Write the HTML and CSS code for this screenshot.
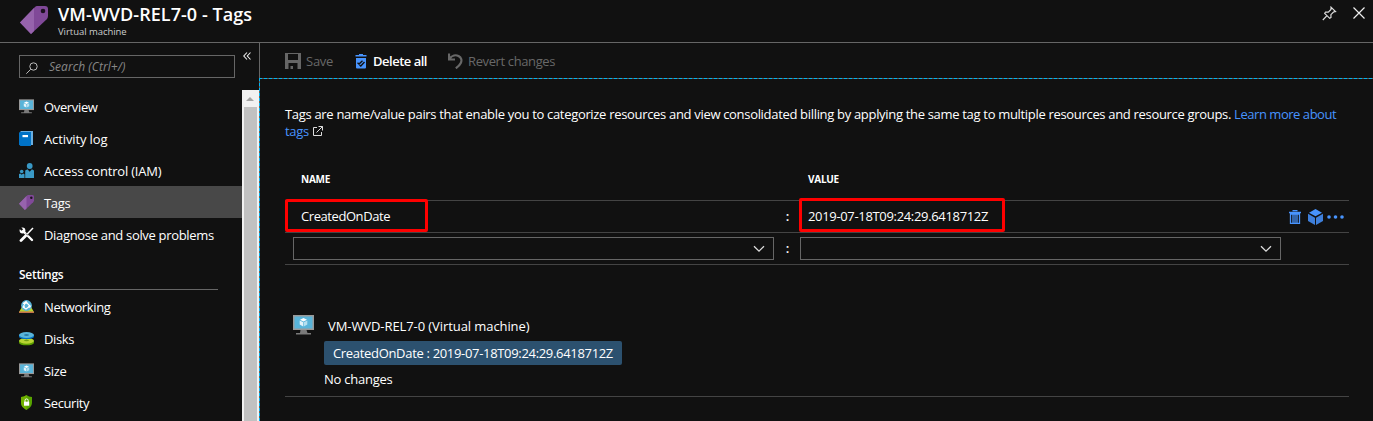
FILE: index.html
```html
<!DOCTYPE html>
<html lang="en">
<head>
<meta charset="utf-8">
<title>VM-WVD-REL7-0 - Tags</title>
<link rel="stylesheet" href="styles.css">
</head>
<body>
<svg class="defs" width="0" height="0" aria-hidden="true">
  <symbol id="tag" viewBox="0 0 28 28"><path d="M0 16.500 15 1q1-1 2-1h8q3 0 3 3v7q0 2-1.500 3.500L11 28z" fill="#804998"/><path d="M0 16.500 14 2v23l-3 3z" fill="#9663ac"/><circle cx="23" cy="5" r="2.300" fill="#1c1020"/></symbol>
  <symbol id="vm" viewBox="0 0 21 20"><path d="M0 0h21v15H0z" fill="#999"/><path d="M1.500 1.500h18v12h-18z" fill="#59b4d9"/><path d="M7.500 15h6l1 3h3.500v1.500h-15V18H7z" fill="#7a7a7a"/><path d="M10.500 3 14 4.700 10.500 6.500 7 4.700z" fill="#fff"/><path d="M6.700 5.500 10.200 7.300v4.200L6.700 9.600z" fill="#e3f3fa"/><path d="M14.300 5.500 10.800 7.300v4.200l3.500-1.900z" fill="#b7e0f0"/></symbol>
  <symbol id="chev" viewBox="0 0 12 8"><path d="m1 1.200 5 5 5-5" fill="none" stroke="#ddd" stroke-width="1.300"/></symbol>
</svg>
<header class="header">
  <svg class="header-icon"><use href="#tag"/></svg>
  <div class="heading"><h1 class="title">VM-WVD-REL7-0 - Tags</h1><p class="subtitle">Virtual machine</p></div>
  <svg class="pin" viewBox="0 0 15 15"><path d="M9 1.200 13.500 5.700 11.500 6 8.900 8.700 9 11.500 7.700 12.300 2.700 7.300 3.500 6 6.300 6.100 9 3.400zM5 9.700.8 14" fill="none" stroke="#ddd" stroke-width="1.200"/></svg>
  <svg class="close" viewBox="0 0 12 12"><path d="m.5.5 11 11M11.500.5l-11 11" fill="none" stroke="#eee" stroke-width="1.200"/></svg>
</header>
<div class="body">
  <aside class="sidebar">
    <div class="search-row">
      <div class="search"><svg class="search-icon" viewBox="0 0 12 12"><circle cx="7.500" cy="4.500" r="3.700" fill="none" stroke="#bbb"/><path d="M4.700 7.300.3 11.700" stroke="#bbb"/></svg><span class="placeholder">Search (Ctrl+/)</span></div>
      <svg class="collapse" viewBox="0 0 8 8"><path d="M4 .5.8 4 4 7.500M7.500.5 4.300 4l3.200 3.500" fill="none" stroke="#eee" stroke-width="1.100"/></svg>
    </div>
    <div class="menu-wrap">
      <nav class="menu">
        <a class="item"><svg class="icon"><use href="#vm"/></svg><span>Overview</span></a>
        <a class="item"><svg class="icon" viewBox="0 0 15 15"><path d="M1.500 0H14v14H1.500z" fill="#6aaee0"/><path d="M1.500 1H12v14H1.500L0 13.500v-12z" fill="#0072c6"/><path d="M3.500 4H9v2.200H3.500z" fill="#fff"/></svg><span class="log">Activity log</span></a>
        <a class="item"><svg class="icon" viewBox="0 0 15 15"><g fill="#3999c6"><circle cx="10.700" cy="3" r="2.900"/><path d="M6.200 7.500 8.500 6.300l2.200 2.400 2.200-2.400L15 7.500V15H6.200z"/><circle cx="2.700" cy="8.500" r="1.800"/><path d="m0 11 1.500-.6 1.200 1.300 1.300-1.300 1.500.8V15H0z"/></g></svg><span class="iam">Access control (IAM)</span></a>
        <a class="item selected"><svg class="icon"><use href="#tag"/></svg><span>Tags</span></a>
        <a class="item"><svg class="icon" viewBox="0 0 15 15"><path d="M3.500 3.500 13 13" stroke="#fff" stroke-width="2.400" stroke-linecap="round"/><circle cx="3.500" cy="3.500" r="2.900" fill="#fff"/><path d="M0 0 3.300 3" stroke="#111" stroke-width="2.300"/><path d="M14 1 7.500 7.700" stroke="#fff" stroke-width="1.500"/><path d="M6.500 9 2 13.500" stroke="#fff" stroke-width="2.800" stroke-linecap="round"/><path d="m7 6.500 2 2" stroke="#111" stroke-width=".7"/></svg><span class="diagnose">Diagnose and solve problems</span></a>
        <h2 class="section">Settings</h2>
        <a class="item"><svg class="icon" viewBox="0 0 15 15"><path d="M3 8h9l3 5H0z" fill="#b8d432"/><path d="M0 12.500h15V14H0z" fill="#c3714a"/><circle cx="7.500" cy="6.500" r="5.400" fill="#59b4d9"/><path d="M4 4.500 7 3l4 4-4 3-3-2 3-5M7 10l4-3" fill="none" stroke="#fff" stroke-width="1.100"/><circle cx="7" cy="3.500" r="1.200" fill="#fff"/><circle cx="10.500" cy="7.500" r="1.200" fill="#fff"/><circle cx="5" cy="8" r="1" fill="#fff"/></svg><span>Networking</span></a>
        <a class="item"><svg class="icon" viewBox="0 0 15 15"><path d="M0 10v1.500c0 3.800 15 3.800 15 0V10z" fill="#5d9e00"/><ellipse cx="7.500" cy="9.800" rx="7.500" ry="2.900" fill="#b8d432"/><ellipse cx="7.500" cy="9.500" rx="2.500" ry=".8" fill="#719e13"/><path d="M0 4v1.500c0 3.500 15 3.500 15 0V4z" fill="#0072c6"/><ellipse cx="7.500" cy="4" rx="7.500" ry="2.900" fill="#59b4d9"/><ellipse cx="7.500" cy="4" rx="2.500" ry=".8" fill="#176694"/></svg><span>Disks</span></a>
        <a class="item"><svg class="icon"><use href="#vm"/></svg><span>Size</span></a>
        <a class="item"><svg class="icon" viewBox="0 0 15 15"><path d="M7.500 0C9 1.300 11 2 13 2v5.500c0 3.500-2.500 5.800-5.500 7.500C4.500 13.300 2 11 2 7.500V2c2 0 4-.7 5.500-2z" fill="#57a300"/><path d="M7.500 0v15C4.500 13.300 2 11 2 7.500V2c2 0 4-.7 5.500-2z" fill="#7fba00" opacity=".65"/><path d="M5 6.700h5.200v4H5z" fill="#fff"/><path d="M6 7V5.500a1.600 1.600 0 0 1 3.200 0V7" fill="none" stroke="#fff"/></svg><span class="security">Security</span></a>
      </nav>
      <div class="scrollbar"><svg class="arrow" viewBox="0 0 8 4"><path d="M4 0 8 4H0z" fill="#a3a3a3"/></svg><div class="thumb"></div></div>
    </div>
  </aside>
  <main class="main">
    <div class="toolbar">
      <div class="tool save"><svg width="16" height="16" viewBox="0 0 16 16"><path d="M0 0h16v16H0z" fill="#666"/><path d="M3 1h10v6H3zM3.500 10h9v6h-9z" fill="#111"/><path d="M5.500 13H8v3H5.500z" fill="#666"/></svg><span>Save</span></div>
      <div class="tool delete"><svg width="12" height="15" viewBox="0 0 12 15"><path d="M4 0h4v1h3.500v1.500H.5V1H4zM1 4h10v9.500q0 1-1 1H2q-1 0-1-1z" fill="#4894fe"/><path d="M2.500 8.700 4 10l3.500-3.200M4.500 11l1.300 1 3.700-4" fill="none" stroke="#111" stroke-width="1.400"/></svg><span>Delete all</span></div>
      <div class="tool revert"><svg width="15" height="16" viewBox="0 0 15 16"><path d="M1 .5v6h6M1.200 6C4 2 8 1.700 10.500 3c3 1.500 3.500 4.500 2.300 7-.9 2-2.500 3.500-5 5.300" fill="none" stroke="#686868" stroke-width="2.200"/></svg><span>Revert changes</span></div>
    </div>
    <div class="content">
      <p class="intro"><span>Tags are name/value pairs that enable you to categorize resources and view consolidated billing by applying the same tag to multiple resources and resource groups.</span> <a class="link learn">Learn more about</a><br><a class="link">tags</a><svg class="external" viewBox="0 0 10 10"><path d="M4 1.500H.5v8h8V6M5.500.5h4v4M9.500.5l-6 6" fill="none" stroke="#ddd"/></svg></p>
      <div class="table">
        <div class="row head"><span class="name">NAME</span><span class="value">VALUE</span></div>
        <div class="row">
          <div class="mark mark-name"><span>CreatedOnDate</span></div><span class="colon">:</span>
          <div class="mark mark-value"><span>2019-07-18T09:24:29.6418712Z</span></div>
          <div class="actions">
            <svg width="12" height="14" viewBox="0 0 12 14"><path d="M3.500.5h5M0 2.500h12M1.500 4v9.400h9V4zM4 4v9M6 4v9M8 4v9" fill="none" stroke="#4894fe" stroke-width="1.300"/></svg>
            <svg width="15" height="16" viewBox="0 0 15 16"><path d="m7.500 0 6.500 3.700-6.500 3.600L1 3.700z" fill="#4894fe"/><path d="m0 4.700 7 4V16l-7-4zM15 4.700l-7 4V16l7-4z" fill="#3e7fdb"/></svg>
            <svg width="17" height="4" viewBox="0 0 17 4"><g fill="#4894fe"><circle cx="2" cy="2" r="1.800"/><circle cx="8.500" cy="2" r="1.800"/><circle cx="15" cy="2" r="1.800"/></g></svg>
          </div>
        </div>
        <div class="row inputs"><div class="select"><svg class="chev"><use href="#chev"/></svg></div><span class="colon">:</span><div class="select"><svg class="chev"><use href="#chev"/></svg></div></div>
      </div>
      <section class="summary">
        <svg class="vm"><use href="#vm"/></svg>
        <div class="details"><p class="resource">VM-WVD-REL7-0 (Virtual machine)</p><p class="pill">CreatedOnDate : 2019-07-18T09:24:29.6418712Z</p><p class="nochange">No changes</p></div>
      </section>
    </div>
  </main>
</div>
</body>
</html>
```
FILE: styles.css
```css
* { box-sizing: border-box; }
body { margin: 0; height: 421px; overflow: hidden; background: #111; color: #fff; font: 13px/18px "Open Sans", "Noto Sans", sans-serif; letter-spacing: -0.25px; display: flex; flex-direction: column; }
p, h1, h2 { margin: 0; }
svg { display: block; flex: none; }
span, a, p, h1 { white-space: nowrap; }
.defs { position: absolute; }
.header { flex: none; height: 43px; border-bottom: 1px solid #666; display: flex; padding-left: 20px; }
.header-icon { width: 28px; height: 28px; margin-top: 6px; }
.heading { margin-left: 10px; flex: 1; }
.title { font-size: 18px; line-height: 24px; font-weight: 600; letter-spacing: 0.05px; margin-top: 2px; }
.subtitle { font-size: 9.5px; line-height: 12px; color: #ccc; letter-spacing: -0.05px; }
.pin { width: 15px; height: 15px; margin: 6px 16px 0 0; }
.close { width: 12px; height: 12px; margin: 7px 8px 0 0; }
.body { flex: 1; min-height: 0; display: flex; }
.sidebar { width: 259px; flex: none; display: flex; flex-direction: column; }
.search-row { height: 47px; flex: none; display: flex; padding: 12px 8px 0 19px; justify-content: space-between; }
.search { width: 216px; height: 23px; border: 1px solid #666; display: flex; align-items: center; padding-left: 6px; }
.search-icon { width: 12px; height: 12px; margin-top: 2px; }
.placeholder { margin-left: 11px; color: #888; font-size: 12px; font-style: italic; letter-spacing: 0.05px; }
.collapse { width: 8px; height: 8px; margin-top: -3px; }
.menu-wrap { flex: 1; min-height: 0; display: flex; }
.menu { width: 242px; overflow: hidden; }
.item { height: 32px; display: flex; align-items: center; padding-left: 19px; gap: 10px; letter-spacing: -0.35px; }
.item span { padding-top: 2px; }
.item .log { letter-spacing: -0.12px; }
.item .iam { letter-spacing: -0.2px; }
.item .diagnose { letter-spacing: -0.32px; }
.item .security { letter-spacing: -0.4px; }
.selected { background: #484848; }
.icon { width: 15px; height: 15px; margin-top: 1px; }
.section { height: 40px; width: 199px; margin-left: 19px; padding-top: 16px; border-bottom: 1px solid #666; font-size: 12px; font-weight: 600; }
.scrollbar { width: 17px; background: #f1f1f1; padding: 7px 2px 0; display: flex; flex-direction: column; }
.arrow { width: 8px; height: 4px; margin: 0 0 6px 2px; }
.thumb { flex: 1; background: #c1c1c1; }
.main { flex: 1; min-width: 0; display: flex; flex-direction: column; }
.toolbar { height: 35px; flex: none; border-left: 1px solid #666; display: flex; align-items: center; padding: 1px 0 0 25px; }
.tool { display: flex; align-items: center; gap: 5px; color: #686868; }
.save { width: 70px; }
.delete { width: 93px; gap: 6px; color: #fff; font-weight: 600; letter-spacing: -0.5px; }
.revert { letter-spacing: -0.38px; }
.content {
  flex: 1;
  padding: 28px 24px 0 26px;
  background:
    repeating-linear-gradient(90deg, #00b4f0 0 3px, #69605c 3px 5px) top / 100% 1px no-repeat,
    repeating-linear-gradient(180deg, #00b4f0 0 3px, #69605c 3px 5px) left / 1px 100% no-repeat;
}
.intro { line-height: 17px; height: 66px; letter-spacing: -0.317px; }
.learn { letter-spacing: -0.46px; }
.link { color: #4894fe; }
.external { display: inline-block; width: 10px; height: 10px; margin-left: 4px; }
.table { width: 1064px; }
.row { height: 32px; border-bottom: 1px solid #444; display: flex; align-items: center; }
.head { height: 29px; font-size: 10px; font-weight: 700; align-items: flex-start; line-height: 14px; padding-left: 16px; }
.head .name { width: 507px; }
.row .colon { padding-bottom: 1px; }
.mark { height: 34px; flex: none; border: 3px solid #f00; border-radius: 2px; display: flex; align-items: center; }
.mark-name { width: 143px; height: 33px; padding: 1px 0 0 13px; margin-top: -2px; letter-spacing: -0.43px; }
.mark-value { width: 206px; margin: -3px 0 0 9px; padding: 2px 0 0 6px; letter-spacing: -0.33px; }
.mark-name + .colon { margin-left: 357px; }
.colon { width: 5px; text-align: center; font-weight: 600; flex: none; }
.actions { margin-left: 284px; display: flex; align-items: center; gap: 7px; }
.actions svg:last-child { margin-left: -3px; }
.inputs { padding-left: 8px; }
.select { width: 481px; height: 23px; border: 1px solid #666; display: flex; align-items: center; justify-content: flex-end; padding-right: 8px; }
.inputs .colon { margin: 0 10px 0 11px; }
.chev { width: 12px; height: 8px; margin-top: 1px; }
.summary { height: 132px; width: 1064px; border-bottom: 1px solid #444; display: flex; padding: 50px 0 0 8px; }
.vm { width: 21px; height: 20px; }
.details { margin-left: 10px; }
.resource { margin: 2px 0 0 4px; letter-spacing: -0.08px; }
.pill { width: 298px; height: 24px; margin-top: 6px; padding: 3px 0 0 9px; background: #2c516f; border-radius: 2px; letter-spacing: -0.32px; }
.nochange { margin-top: 5px; }
```
